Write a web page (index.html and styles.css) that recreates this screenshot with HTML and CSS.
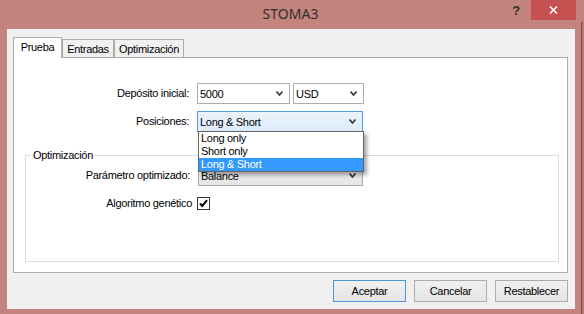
FILE: index.html
```html
<!DOCTYPE html>
<html lang="es">
<head>
    <meta charset="UTF-8">
    <title>STOMA3</title>
    <link rel="stylesheet" href="styles.css">
</head>
<body>
    <div class="window">
        <div class="titlebar">
            <span class="title">STOMA3</span>
            <div class="controls">
                <span class="help">?</span>
                <span class="close">
                    <svg width="9" height="8" viewBox="0 0 9 8"><path d="M1 0.5 L8 7.5 M8 0.5 L1 7.5" stroke="#fff" stroke-width="1.6" fill="none"/></svg>
                </span>
            </div>
        </div>
        <div class="client">
            <div class="tabs">
                <div class="tab active">Prueba</div>
                <div class="tab t-ent">Entradas</div>
                <div class="tab t-opt">Optimización</div>
            </div>
            <div class="page">
                <div class="form">
                    <label class="lbl">Depósito inicial:</label>
                    <div class="ctrls">
                        <div class="combo w-dep">5000
                            <svg class="chev" width="7" height="5" viewBox="0 0 7 5"><path d="M0.6 0.6 L3.5 4 L6.4 0.6" fill="none" stroke="#3c3c3c" stroke-width="1.7"/></svg>
                        </div>
                        <div class="combo w-cur">USD
                            <svg class="chev" width="7" height="5" viewBox="0 0 7 5"><path d="M0.6 0.6 L3.5 4 L6.4 0.6" fill="none" stroke="#3c3c3c" stroke-width="1.7"/></svg>
                        </div>
                    </div>
                    <label class="lbl">Posiciones:</label>
                    <div class="combo hot w-pos">Long &amp; Short
                        <svg class="chev" width="7" height="5" viewBox="0 0 7 5"><path d="M0.6 0.6 L3.5 4 L6.4 0.6" fill="none" stroke="#3c3c3c" stroke-width="1.7"/></svg>
                        <ul class="droplist">
                            <li>Long only</li>
                            <li>Short only</li>
                            <li class="sel">Long &amp; Short</li>
                        </ul>
                    </div>
                </div>
                <fieldset class="group">
                    <legend>Optimización</legend>
                    <div class="form gform">
                        <label class="lbl">Parámetro optimizado:</label>
                        <div class="combo list w-par">Balance
                            <svg class="chev" width="7" height="5" viewBox="0 0 7 5"><path d="M0.6 0.6 L3.5 4 L6.4 0.6" fill="none" stroke="#3c3c3c" stroke-width="1.7"/></svg>
                        </div>
                        <label class="lbl chk-lbl">Algoritmo genético</label>
                        <span class="checkbox">
                            <svg width="11" height="11" viewBox="0 0 11 11"><path d="M2 5.5 L4.3 8 L9 2.2" fill="none" stroke="#000" stroke-width="2"/></svg>
                        </span>
                    </div>
                </fieldset>
            </div>
            <div class="buttons">
                <button class="btn default">Aceptar</button>
                <button class="btn">Cancelar</button>
                <button class="btn">Restablecer</button>
            </div>
        </div>
    </div>
    <div class="edge"></div>
</body>
</html>
```

FILE: styles.css
```css
body {
    margin: 0;
    width: 584px;
    height: 314px;
    overflow: hidden;
    display: flex;
    background: #c4847e;
    font-family: "Liberation Sans", Arial, sans-serif;
    font-size: 11px;
    letter-spacing: -0.3px;
    color: #000;
}
.window {
    width: 581px;
    display: flex;
    flex-direction: column;
}
.edge {
    width: 3px;
    margin-top: 22px;
    background: linear-gradient(to right, #6f4b47 1px, #b9786f 1px);
}

/* title bar */
.titlebar {
    height: 29px;
    display: grid;
}
.title, .controls {
    grid-area: 1 / 1;
}
.title {
    text-align: center;
    font-family: "Noto Sans", sans-serif;
    font-size: 14px;
    letter-spacing: 0;
    line-height: 28px;
    color: #2e2e2e;
}
.controls {
    justify-self: end;
    display: flex;
    align-items: flex-start;
    margin-right: 5px;
}
.help {
    font-weight: bold;
    font-size: 13px;
    line-height: 13px;
    margin-top: 4px;
    margin-right: 11px;
    color: #2b2b2b;
}
.close {
    width: 45px;
    height: 20px;
    background: #c75050;
    display: flex;
    align-items: center;
    justify-content: center;
}

/* client area */
.client {
    height: 280px;
    margin: 0 6px 0 7px;
    padding: 8px 7px 0 6px;
    box-sizing: border-box;
    background: #f0f0f0;
}
.tabs {
    display: flex;
    align-items: flex-end;
    height: 21px;
    margin-bottom: -1px;
    position: relative;
    z-index: 1;
}
.tab {
    box-sizing: border-box;
    height: 18px;
    margin-bottom: 1px;
    padding-top: 3px;
    line-height: 13px;
    border: 1px solid #acacac;
    border-bottom: none;
    background: #f0f0f0;
    text-align: center;
}
.tab.active {
    width: 49px;
    height: 21px;
    margin-bottom: 0;
    background: #fff;
}
.t-ent {
    width: 52px;
}
.t-opt {
    width: 70px;
}
.page {
    height: 216px;
    box-sizing: border-box;
    border: 1px solid #acacac;
    background: #fff;
    padding-top: 25px;
}

/* forms */
.form {
    display: grid;
    grid-template-columns: 175px auto;
    column-gap: 8px;
    row-gap: 7px;
    align-items: center;
    justify-items: start;
}
.lbl {
    justify-self: end;
    line-height: 13px;
}
.ctrls {
    display: flex;
    gap: 3px;
}
.combo {
    height: 21px;
    box-sizing: border-box;
    display: flex;
    align-items: center;
    justify-content: space-between;
    padding: 0 6px 0 2px;
    border: 1px solid #abadb3;
    background: #fff;
}
.w-dep {
    width: 93px;
}
.w-cur {
    width: 71px;
}
.w-pos {
    width: 166px;
}
.w-par {
    width: 165px;
}
.combo.hot {
    position: relative;
    z-index: 2;
    border-color: #569de5;
    background: linear-gradient(#ecf4fc, #dcecfc);
}
.combo.list {
    border-color: #acacac;
    background: linear-gradient(#f0f0f0, #e5e5e5);
}
.droplist {
    position: absolute;
    top: 100%;
    left: 0;
    width: 166px;
    box-sizing: border-box;
    margin: 0;
    padding: 0;
    list-style: none;
    border: 1px solid #646464;
    background: #fff;
    box-shadow: 3px 3px 4px rgba(0, 0, 0, 0.35);
}
.droplist li {
    height: 13px;
    line-height: 13px;
    padding-left: 2px;
}
.droplist li.sel {
    background: #3399ff;
    color: #fff;
}

/* group box */
.group {
    margin: 17px 8px 0 11px;
    padding: 3px 0 51px 0;
    min-width: 0;
    border: 1px solid #dcdcdc;
}
.group legend {
    margin-left: 5px;
    padding: 0 2px;
    line-height: 13px;
}
.gform {
    grid-template-columns: 164px auto;
    row-gap: 11px;
}
.chk-lbl {
    margin-right: -2px;
}
.checkbox {
    width: 13px;
    height: 13px;
    box-sizing: border-box;
    margin-left: -1px;
    border: 1px solid #333;
    background: #fff;
    display: flex;
}

/* buttons */
.buttons {
    display: flex;
    justify-content: flex-end;
    gap: 8px;
    margin-top: 7px;
}
.btn {
    width: 73px;
    height: 22px;
    padding: 0;
    font-family: inherit;
    font-size: 11px;
    letter-spacing: -0.3px;
    color: #000;
    border: 1px solid #acacac;
    background: linear-gradient(#f0f0f0, #e5e5e5);
}
.btn.default {
    border-color: #4a98e4;
}
```
